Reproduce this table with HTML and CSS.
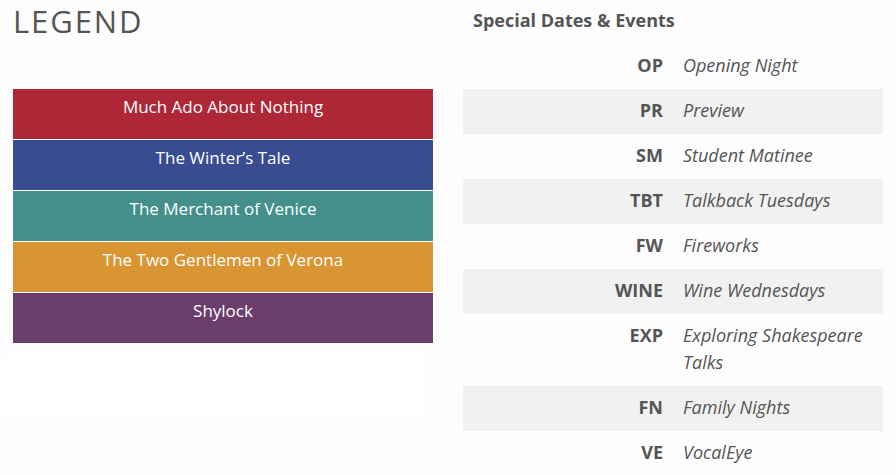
FILE: index.html
```html
<!DOCTYPE html>
<html>
<head>
<meta charset="utf-8">
<link rel="stylesheet" href="styles.css">
</head>
<body>
<div class="page">
  <section class="legend">
    <h1 class="legend-title">LEGEND</h1>
    <ul class="shows">
      <li class="show show-red">Much Ado About Nothing</li>
      <li class="show show-blue">The Winter’s Tale</li>
      <li class="show show-teal">The Merchant of Venice</li>
      <li class="show show-orange">The Two Gentlemen of Verona</li>
      <li class="show show-purple">Shylock</li>
    </ul>
    <div class="blank-box"></div>
  </section>
  <section class="events">
    <h2 class="events-title">Special Dates &amp; Events</h2>
    <table class="events-table">
      <tr><td class="abbr">OP</td><td class="desc">Opening Night</td></tr>
      <tr><td class="abbr">PR</td><td class="desc">Preview</td></tr>
      <tr><td class="abbr">SM</td><td class="desc">Student Matinee</td></tr>
      <tr><td class="abbr">TBT</td><td class="desc">Talkback Tuesdays</td></tr>
      <tr><td class="abbr">FW</td><td class="desc">Fireworks</td></tr>
      <tr><td class="abbr">WINE</td><td class="desc">Wine Wednesdays</td></tr>
      <tr><td class="abbr">EXP</td><td class="desc">Exploring Shakespeare Talks</td></tr>
      <tr><td class="abbr">FN</td><td class="desc">Family Nights</td></tr>
      <tr><td class="abbr">VE</td><td class="desc">VocalEye</td></tr>
    </table>
  </section>
</div>
</body>
</html>
```
FILE: styles.css
```css
html, body {
  margin: 0;
  padding: 0;
  background: #fdfdfd;
}
body {
  font-family: "Open Sans", "Liberation Sans", sans-serif;
  color: #555;
}
.page {
  display: flex;
  gap: 30px;
  padding-left: 13px;
}
.legend {
  width: 420px;
  display: flex;
  flex-direction: column;
}
.legend-title {
  margin: 0;
  padding-top: 0;
  font-size: 31px;
  font-weight: 400;
  letter-spacing: 1.9px;
  line-height: 42px;
  color: #555;
  height: 89px;
  box-sizing: border-box;
}
.shows {
  list-style: none;
  margin: 0;
  padding: 0;
}
.show {
  height: 51px;
  box-sizing: border-box;
  padding-top: 5px;
  line-height: 26px;
  font-size: 17px;
  text-align: center;
  color: #fff;
  border-bottom: 1px solid #fff;
}
.show-red { background: #ae2736; }
.show-blue { background: #384c92; }
.show-teal { background: #43908a; }
.show-orange { background: #da9533; }
.show-purple { background: #6a3d6a; }
.blank-box {
  margin: 9px 6px 0 -10px;
  height: 63px;
  background: #fff;
}
.events {
  width: 420px;
}
.events-title {
  margin: 0;
  padding: 8px 10px 0;
  height: 44px;
  box-sizing: border-box;
  font-size: 18px;
  font-weight: 700;
  line-height: 24px;
}
.events-table {
  width: 420px;
  border-collapse: collapse;
  font-size: 18px;
}
.events-table td {
  padding: 8px 10px 10px;
  line-height: 27px;
  vertical-align: top;
  width: 50%;
}
.events-table tr:nth-child(even) td {
  background: #f1f1f1;
}
.abbr {
  text-align: right;
  font-weight: 700;
}
.desc {
  font-style: italic;
}
```
